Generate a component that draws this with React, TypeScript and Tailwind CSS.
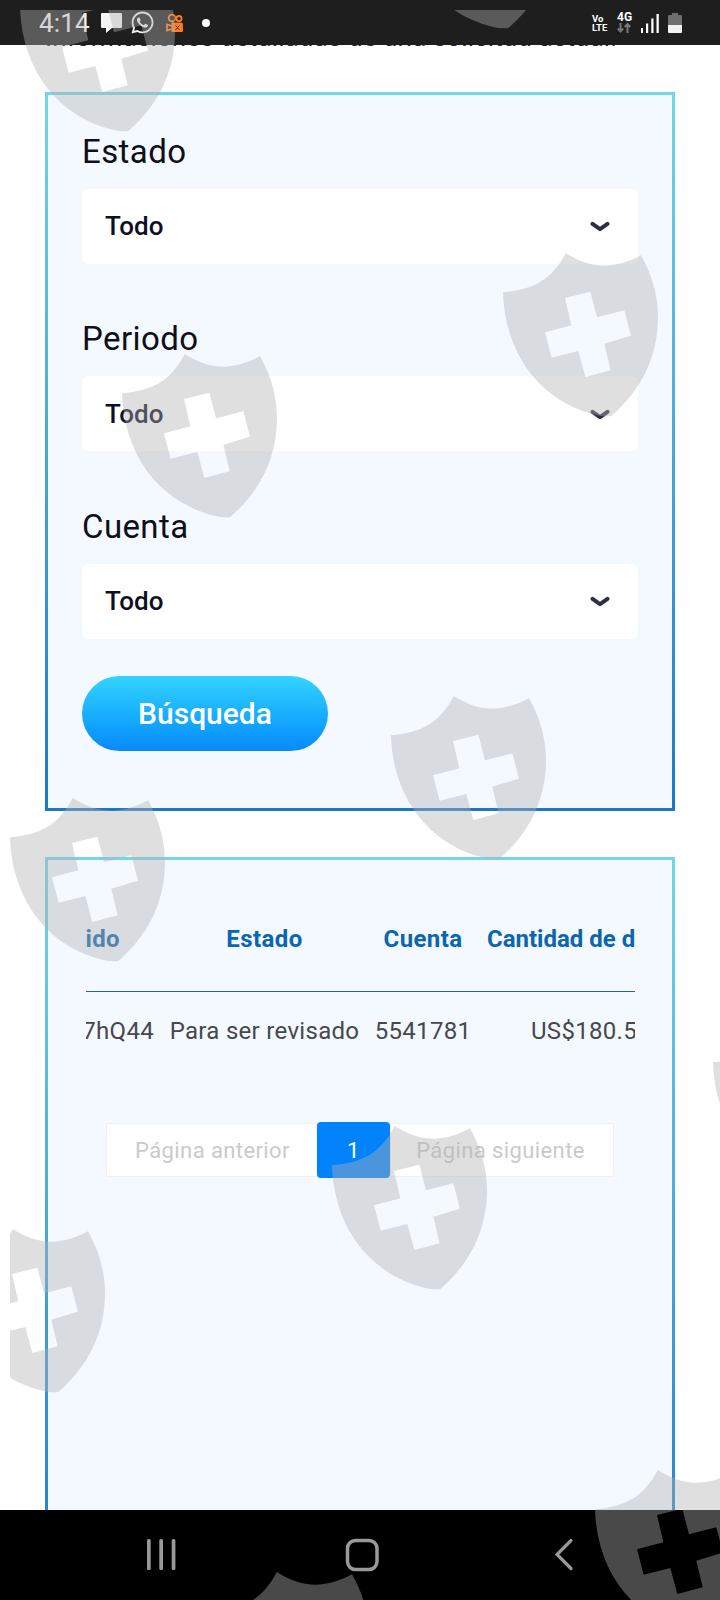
import { FaWhatsapp } from 'react-icons/fa';

interface ShieldPosition {
  x: number;
  y: number;
}

const SHIELDS: ShieldPosition[] = [
  { x: 19.5, y: -32.5 },
  { x: 400, y: -135 },
  { x: 502.5, y: 253 },
  { x: 122, y: 354.3 },
  { x: 391, y: 695.7 },
  { x: 9.7, y: 798 },
  { x: 712.5, y: 1023.3 },
  { x: 331.5, y: 1126 },
  { x: -50.3, y: 1228.7 },
  { x: 213.7, y: 1571.5 },
  { x: 594.7, y: 1469.5 },
];

const FILTERS = ['Estado', 'Periodo', 'Cuenta'];

function Shield({ x, y }: ShieldPosition) {
  return (
    <svg
      className="absolute w-[155px] h-[164px] overflow-visible"
      style={{ left: x - 10, top: y - 10 }}
      viewBox="0 0 465 492"
    >
      <path
        fill="#b1b2b2"
        fillOpacity="0.41"
        fillRule="evenodd"
        d="M0 118 C90 110 146 82 188 0 C225 24 265 38 304 38 C342 38 380 25 414 7 C450 70 466 135 465 200 C462 320 410 415 325 489 Q302 492 280 486 C110 445 5 300 0 118 Z M186 135 L205 217 L126 238 L146 314 L226 294 L247 372 L323 352 L304 272 L384 248 L364 172 L282 193 L262 116 Z"
      />
    </svg>
  );
}

function StatusBar() {
  return (
    <header className="relative z-10 h-[45px] shrink-0 bg-[#1e1e1e] flex items-center justify-between pl-[39px] pr-[38px]">
      <div className="flex items-center text-[#f0f0f0]">
        <span className="w-[62px] text-[26px] leading-none tracking-[0.2px]">4:14</span>
        <svg className="w-[21px] h-[20px]" viewBox="0 0 21 20" fill="#f4f4f4">
          <path d="M1 0h19q1 0 1 1v13q0 1-1 1h-9l-6 5v-5H1q-1 0-1-1V1q0-1 1-1z" />
        </svg>
        <FaWhatsapp className="ml-[8px] size-[25px]" />
        <svg className="ml-[11px] w-[17px] h-[19px]" viewBox="0 0 17 19" fill="none" stroke="#ff7d1f" strokeWidth="1.8">
          <circle cx="6" cy="5" r="3.4" />
          <circle cx="13" cy="5.6" r="2.6" />
          <path d="M6.500 10.500h8.500q1 0 1 1v6q0 1-1 1H6.500z" fill="#ff7d1f" />
          <path d="M6 13 1 11.500v6L6 16" />
          <path d="m9.500 12.500 2 2 2-2M9.500 16.800l2-2 2 2" stroke="#5a3a20" strokeWidth="1" />
        </svg>
        <span className="ml-[19px] size-[8px] rounded-full bg-white" />
      </div>
      <div className="flex items-center">
        <div className="w-[25px] text-[9.5px] font-bold leading-[9px] text-white">
          Vo
          <br />
          LTE
        </div>
        <div className="w-[24px] flex flex-col items-start text-white">
          <span className="text-[12px] font-bold leading-[11px]">4G</span>
          <svg className="w-[14px] h-[10px]" viewBox="0 0 14 10" fill="none" stroke="#777" strokeWidth="2">
            <path d="M3.5 0v8M.8 5.5l2.7 3 2.7-3M10.500 10V1.500M7.800 4l2.700-3 2.700 3" />
          </svg>
        </div>
        <svg className="w-[18px] h-[20px]" viewBox="0 0 18 20" fill="#fff">
          <path d="M0 15h2v5H0zM5 10.500h2.200v9.500H5zM10.300 5.500h2.200V20h-2.200zM15.500 1h2.300v19h-2.300z" />
        </svg>
        <svg className="ml-[9px] w-[14px] h-[20px]" viewBox="0 0 14 20">
          <path fill="#6e6e6e" d="M4 0h6v2h3q1 0 1 1v9H0V3q0-1 1-1h3z" />
          <path fill="#f2f2f2" d="M0 12h14v7q0 1-1 1H1q-1 0-1-1z" />
        </svg>
      </div>
    </header>
  );
}

function FilterField({ label }: { label: string }) {
  return (
    <div className="h-[187.5px]">
      <div className="h-[57px] text-[33px] leading-[40px] tracking-[0.4px] text-[#0d0f1a]">{label}</div>
      <button className="w-full h-[75px] rounded-[6px] bg-white flex items-center justify-between pl-[23px] pr-[28px]">
        <span className="text-[26px] font-medium leading-none tracking-[0.1px] text-[#0d0f24]">Todo</span>
        <svg className="mt-[2px] w-[20px] h-[12px]" viewBox="0 0 20 12" fill="none">
          <path d="M2.500 2.800 L10 8.200 L17.500 2.800" stroke="#2f2f44" strokeWidth="4" strokeLinecap="round" strokeLinejoin="round" />
        </svg>
      </button>
    </div>
  );
}

function RequestsTable() {
  return (
    <div className="-mr-px overflow-hidden whitespace-nowrap text-[24px]">
      <div className="grid grid-cols-[76px_205px_112px_234px] h-[71px] border-b border-[#2f6b6c] font-bold text-[#0b66b0] leading-[36px] tracking-[0.400px]">
        <span className="flex justify-end pr-[42px]">Pedido</span>
        <span className="text-center">Estado</span>
        <span className="text-center">Cuenta</span>
        <span className="pl-[8px] tracking-[0px]">Cantidad de dinero</span>
      </div>
      <div className="grid grid-cols-[76px_205px_112px_234px] pt-[21px] h-[94px] text-[#46484d] leading-[36px] tracking-[0.300px]">
        <span className="flex justify-end pr-[8px]">7hQ44</span>
        <span className="text-center">Para ser revisado</span>
        <span className="text-center">5541781</span>
        <span className="pl-[52px]">US$180.50</span>
      </div>
    </div>
  );
}

function Pagination() {
  return (
    <div className="ml-[20px] flex items-center text-[22px] tracking-[0.400px] text-[#cacaca]">
      <button className="w-[211px] h-[54px] pl-[2px] bg-white border border-[#f0f1f3]">Página anterior</button>
      <button className="w-[73px] h-[56px] rounded-[4px] bg-[#0283fb] text-white">1</button>
      <button className="w-[224px] h-[54px] pr-[3px] bg-white border border-[#f0f1f3]">Página siguiente</button>
    </div>
  );
}

function NavBar() {
  return (
    <nav className="relative z-10 h-[90px] shrink-0 bg-black text-[#999]">
      <div className="flex items-center pt-[27.500px] pl-[146px]">
        <svg className="w-[32px] h-[33px]" viewBox="0 0 32 33" fill="currentColor">
          <rect x="1" y="1" width="3.700" height="31" rx="1.500" />
          <rect x="13.300" y="1" width="3.700" height="31" rx="1.500" />
          <rect x="25.700" y="1" width="3.700" height="31" rx="1.500" />
        </svg>
        <svg className="ml-[167px] w-[34px] h-[34px]" viewBox="0 0 34 34" fill="none" stroke="currentColor" strokeWidth="3.500">
          <rect x="2.500" y="2.500" width="29.500" height="29" rx="8" />
        </svg>
        <svg className="ml-[175px] w-[20px] h-[33px]" viewBox="0 0 20 33" fill="none" stroke="currentColor" strokeWidth="3.200" strokeLinecap="round">
          <path d="M17 2.500 L3 16.500 L17 30.500" />
        </svg>
      </div>
    </nav>
  );
}

export default function App() {
  return (
    <div className="relative w-[720px] h-[1600px] overflow-hidden bg-white flex flex-col font-['Roboto',sans-serif]">
      <StatusBar />

      {/* the intro line is scrolled under the status bar, only its baseline peeks out */}
      <main className="flex-1 min-h-0 px-[45px]">
        <p className="-mt-[24px] mb-[39px] h-[32px] whitespace-nowrap text-[26px] leading-[32px] tracking-[0.1px] text-[#222]">
          Informaciones detalladas de una solicitud actual.
        </p>

        <section className="h-[719px] p-[3px] bg-linear-to-b from-[#74d6ea] to-[#1b78c6]">
          <div className="h-full bg-[#f4f8ff] px-[34px] pt-[36.500px]">
            {FILTERS.map((label) => (
              <FilterField key={label} label={label} />
            ))}
            <button className="-mt-[18px] block w-[246px] h-[75px] rounded-full bg-linear-to-b from-[#33d4fe] to-[#0a89fb] text-[30px] font-medium text-white">
              Búsqueda
            </button>
          </div>
        </section>

        <section className="mt-[46px] h-[757px] p-[3px] bg-linear-to-b from-[#74d6ea] to-[#1b78c6]">
          <div className="h-full bg-[#f4f8ff] px-[38px] pt-[61px]">
            <RequestsTable />
            <div className="mt-[36px]">
              <Pagination />
            </div>
          </div>
        </section>
      </main>

      <NavBar />

      <div className="absolute top-[10px] left-[10px] right-0 bottom-0 z-20 overflow-hidden pointer-events-none">
        {SHIELDS.map((shield) => (
          <Shield key={`${shield.x}-${shield.y}`} x={shield.x} y={shield.y} />
        ))}
      </div>
    </div>
  );
}
